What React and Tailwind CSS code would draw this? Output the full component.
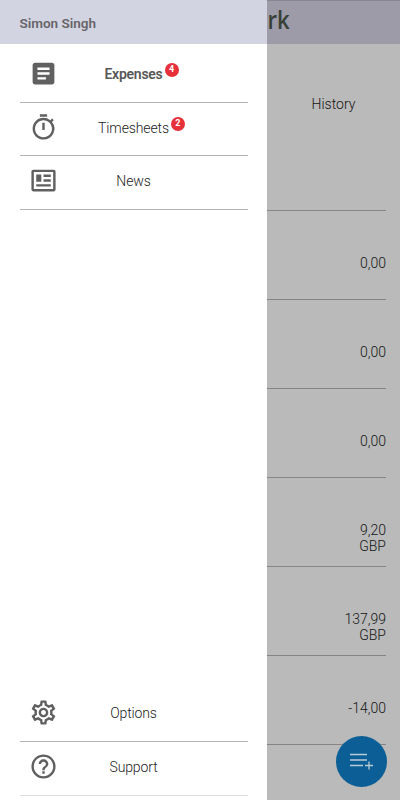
import { MdArticle, MdOutlineTimer, MdOutlineSettings, MdHelpOutline } from "react-icons/md";

function NewsIcon() {
  return (
    <svg viewBox="0 0 24 24" className="size-[29px]" fill="currentColor">
      <path fillRule="evenodd" d="M3.500 3h17A1.500 1.500 0 0 1 22 4.500v15a1.500 1.500 0 0 1-1.500 1.500h-17A1.500 1.500 0 0 1 2 19.500v-15A1.500 1.500 0 0 1 3.500 3zM4 5v14h16V5z" />
      <path d="M6 7h4.200v6H6zM12 7h6v2h-6zM12 11h6v2h-6zM6 15h12v2H6z" />
    </svg>
  );
}

function Badge({ children }) {
  return (
    <span className="absolute left-full -top-px ml-[2px] flex size-[14px] items-center justify-center rounded-full bg-[#e6303a] text-[9px] leading-none font-bold tracking-normal text-white">
      {children}
    </span>
  );
}

function MenuItem({ icon, label, badge, active, height = "h-[54px]", line = "border-[#b3b3b3]" }) {
  return (
    <li className={"flex items-center border-b pl-[9.500px] pr-[38.500px] pb-[3px] " + height + " " + line}>
      <span className="-mt-px shrink-0 text-[#606060]">{icon}</span>
      <span className="flex flex-1 justify-center">
        <span className={"relative whitespace-nowrap text-[14px] leading-5 " + (active ? "tracking-[-0.25px] font-semibold text-[#585858]" : "tracking-[-0.12px] font-light text-[#222]")}>
          {label}
          {badge && <Badge>{badge}</Badge>}
        </span>
      </span>
    </li>
  );
}

const rows = [["0,00"], ["0,00"], ["0,00"], ["9,20", "GBP"], ["137,99", "GBP"], ["-14,00"]];
const iconSize = "size-[29px]";

export default function App() {
  return (
    <div className="relative flex h-[800px] w-[400px] overflow-hidden bg-white font-['Roboto',sans-serif]">
      <aside className="flex w-[267px] shrink-0 flex-col bg-white">
        <header className="flex h-11 items-center bg-[#d3d4e1] pl-[19.500px] pt-0.5 text-[13.500px] font-semibold text-[#666469]">
          Simon Singh
        </header>
        <ul className="mx-[19.500px] mt-1">
          <MenuItem icon={<MdArticle className={iconSize} />} label="Expenses" badge="4" active height="h-[55px]" />
          <MenuItem icon={<MdOutlineTimer className={iconSize} />} label="Timesheets" badge="2" height="h-[53px]" />
          <MenuItem icon={<NewsIcon />} label="News" />
        </ul>
        <ul className="mx-[19.500px] mt-auto mb-1">
          <MenuItem icon={<MdOutlineSettings className={iconSize} />} label="Options" />
          <MenuItem icon={<MdHelpOutline className={iconSize} />} label="Support" line="border-[#dedede]" />
        </ul>
      </aside>
      <main className="flex w-[133px] flex-col bg-[#bababa] text-[14px] font-light text-[#151515]">
        <header className="flex h-11 overflow-hidden border-t border-[#88878f] bg-[#9c9ba7] font-['Open_Sans',sans-serif] text-[26px] leading-[36px] font-semibold text-[#374037]">
          <span className="-ml-[13px] inline-block h-9 origin-left scale-x-[0.85]">ork</span>
        </header>
        <div className="mr-[14px] h-[167px] border-b border-[#858585] pt-[50px] text-center">
          <span className="ml-[14px]">History</span>
        </div>
        {rows.map((lines, i) => (
          <div key={i} className="mr-[14px] h-[89px] shrink-0 border-b border-[#858585] pt-[43.500px] text-right leading-4">
            {lines.map((line) => <div key={line}>{line}</div>)}
          </div>
        ))}
      </main>
      <button className="absolute left-[336px] top-[736px] flex size-[51px] items-center justify-center rounded-full bg-[#0b5f96]" aria-label="Add expense">
        <svg viewBox="0 0 24 18" className="-mt-0.5 -ml-0.5 h-[18px] w-6" fill="none" stroke="#b9cbd6" strokeWidth="1.300">
          <path d="M1 2.500h17M1 8h17M1 13.500h13M16 13.500h8M20 9.500v8" />
        </svg>
      </button>
    </div>
  );
}
